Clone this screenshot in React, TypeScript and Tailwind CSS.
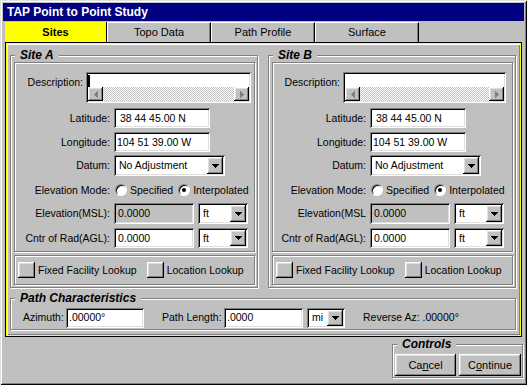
import React from "react";

const raised =
  "shadow-[inset_-1px_-1px_#000,inset_1px_1px_#fff,inset_-2px_-2px_#808080,inset_2px_2px_#dfdfdf]";
const sunken =
  "shadow-[inset_1px_1px_#808080,inset_-1px_-1px_#fff,inset_2px_2px_#000,inset_-2px_-2px_#dfdfdf]";
const etched = "border border-[#808080] shadow-[inset_1px_1px_#fff,1px_1px_#fff]";
const dither =
  "bg-[image:repeating-conic-gradient(#fff_0_25%,#c0c0c0_0_50%)] bg-[length:2px_2px]";

function Tri({ dir, fill = "#000" }: { dir: "down" | "left" | "right"; fill?: string }) {
  if (dir === "down") {
    return (
      <svg width="7" height="4" shapeRendering="crispEdges" fill={fill}>
        <rect x="0" y="0" width="7" height="1" />
        <rect x="1" y="1" width="5" height="1" />
        <rect x="2" y="2" width="3" height="1" />
        <rect x="3" y="3" width="1" height="1" />
      </svg>
    );
  }
  const xs = dir === "left" ? [0, 1, 2, 3] : [3, 2, 1, 0];
  return (
    <svg width="4" height="7" shapeRendering="crispEdges" fill={fill}>
      <rect x={xs[0]} y="3" width="1" height="1" />
      <rect x={xs[1]} y="2" width="1" height="3" />
      <rect x={xs[2]} y="1" width="1" height="5" />
      <rect x={xs[3]} y="0" width="1" height="7" />
    </svg>
  );
}

function Group({
  title,
  className,
  children,
}: {
  title: string;
  className: string;
  children: React.ReactNode;
}) {
  return (
    <div className={`relative ${etched} ${className}`}>
      <span className="absolute -top-[8px] left-[4px] px-[5px] bg-[#c0c0c0] font-bold italic text-[12px] leading-[14px] whitespace-nowrap">
        {title}
      </span>
      {children}
    </div>
  );
}

function Field({ className, text, pad = "pl-[1px]", bg = "bg-white" }: { className: string; text: string; pad?: string; bg?: string }) {
  return (
    <div className={`${className} h-full ${bg} ${sunken} flex items-center whitespace-pre ${pad}`}>
      <span className="pl-[2px]">{text}</span>
    </div>
  );
}

function Select({ className, text }: { className: string; text: string }) {
  return (
    <div className={`${className} h-full bg-white ${sunken} p-[2px] flex`}>
      <span className="flex-1 pl-[3px] flex items-center whitespace-nowrap overflow-hidden">{text}</span>
      <div className={`w-[16px] h-full bg-[#c0c0c0] ${raised} flex items-center justify-center`}>
        <Tri dir="down" />
      </div>
    </div>
  );
}

function Radio({ checked }: { checked?: boolean }) {
  return (
    <span className="w-[12px] h-[12px] rounded-full bg-white border border-t-[#808080] border-l-[#808080] border-r-[#fff] border-b-[#fff] shadow-[inset_1px_1px_#000] flex items-center justify-center">
      {checked && <span className="w-[4px] h-[4px] rounded-full bg-black" />}
    </span>
  );
}

function Row({ lbl, label, cls, children }: { lbl: string; label: string; cls: string; children: React.ReactNode }) {
  return (
    <div className={`flex items-center ${cls}`}>
      <div className={`${lbl} text-right pr-[4px] whitespace-nowrap`}>{label}</div>
      {children}
    </div>
  );
}

type SiteProps = {
  name: string;
  descLbl: string;
  lbl: string;
  descBox: string;
  caret?: boolean;
  mslLabel: string;
};

function Site({ name, descLbl, lbl, descBox, caret, mslLabel }: SiteProps) {
  return (
    <Group title={name} className="w-[248px] pt-[6px] pl-[3px] pr-[2px] pb-[2px]">
      <div className={`${etched} flex flex-col pt-[9px] pb-[3px]`}>
        {/* description with scroller */}
        <div className="flex">
          <div className={`${descLbl} text-right pr-[3px] pt-[4px]`}>Description:</div>
          <div className={`${descBox} h-[31px] bg-white ${sunken} p-[2px] flex flex-col`}>
            <div className="flex-1 flex pt-[1px]">
              {caret && <div className="w-[2px] h-[12px] bg-black" />}
            </div>
            <div className="h-[14px] flex">
              <div className={`w-[15px] h-full bg-[#c0c0c0] ${raised} flex items-center justify-center`}>
                <Tri dir="left" fill="#808080" />
              </div>
              <div className={`flex-1 ${dither}`} />
              <div className={`w-[15px] h-full bg-[#c0c0c0] ${raised} flex items-center justify-center`}>
                <Tri dir="right" fill="#808080" />
              </div>
            </div>
          </div>
        </div>

        <Row lbl={lbl} label="Latitude:" cls="h-[20px] mt-[5px]">
          <Field className="w-[96px]" text=" 38 44 45.00 N" />
        </Row>
        <Row lbl={lbl} label="Longitude:" cls="h-[20px] mt-[4px]">
          <Field className="w-[96px]" text="104 51 39.00 W" />
        </Row>
        <Row lbl={lbl} label="Datum:" cls="h-[21px] mt-[3px]">
          <Select className="w-[111px]" text="No Adjustment" />
        </Row>
        <Row lbl={lbl} label="Elevation Mode:" cls="h-[18px] mt-[5px]">
          <div className="flex items-center ml-[1px]">
            <Radio />
            <span className="ml-[3px]">Specified</span>
            <span className="ml-[5px]">
              <Radio checked />
            </span>
            <span className="ml-[3px]">Interpolated</span>
          </div>
        </Row>
        <Row lbl={lbl} label={mslLabel} cls="h-[21px] mt-[4px]">
          <Field className="w-[80px]" text="0.0000" pad="pl-[2px]" bg="bg-[#c0c0c0]" />
          <Select className="w-[50px] ml-[4px]" text="ft" />
        </Row>
        <Row lbl={lbl} label="Cntr of Rad(AGL):" cls="h-[20px] mt-[4px]">
          <Field className="w-[80px]" text="0.0000" pad="pl-[2px]" />
          <Select className="w-[50px] ml-[4px]" text="ft" />
        </Row>
      </div>

      {/* lookups */}
      <div className={`${etched} mt-[3px] h-[30px] flex items-center pl-[3px]`}>
        <div className={`w-[17px] h-[16px] bg-[#c0c0c0] ${raised}`} />
        <span className="ml-[3px]">Fixed Facility Lookup</span>
        <div className={`ml-[10px] w-[17px] h-[16px] bg-[#c0c0c0] ${raised}`} />
        <span className="ml-[3px]">Location Lookup</span>
      </div>
    </Group>
  );
}

function Btn({ className, children }: { className: string; children: React.ReactNode }) {
  return (
    <button className={`${className} h-[22px] bg-[#c0c0c0] ${raised} flex items-center justify-center text-[11px]`}>
      {children}
    </button>
  );
}

export default function App() {
  return (
    <div className="w-[527px] h-[385px] bg-[#c0c0c0] p-[3px] flex flex-col text-[10.5px] leading-[13px] text-black font-['Liberation_Sans',Arial,sans-serif] shadow-[inset_1px_1px_#dfdfdf,inset_-1px_-1px_#000,inset_2px_2px_#fff,inset_-2px_-2px_#808080] overflow-hidden select-none">
      {/* title bar */}
      <div className="h-[18px] shrink-0 bg-[#000080] text-white font-bold text-[12px] pl-[4px] flex items-center">
        TAP Point to Point Study
      </div>

      {/* tabs */}
      <div className="mt-[1px] h-[20px] shrink-0 flex pl-[2px] text-[11px]">
        <div className="w-[102px] bg-[#ffff00] font-bold flex items-center justify-center border-r border-black">
          Sites
        </div>
        {["Topo Data", "Path Profile", "Surface"].map((t) => (
          <div
            key={t}
            className="w-[104px] border-t border-l border-r border-t-white border-l-white border-r-black shadow-[inset_-1px_0_#808080] flex items-center justify-center"
          >
            {t}
          </div>
        ))}
      </div>

      {/* tab panel */}
      <div className="mx-[2px] h-[295px] shrink-0 border border-black">
        <div className="h-full border border-[#ffff00]">
          <div className="h-full pt-[1px] pl-[1px] shadow-[inset_1px_1px_#fff,inset_-1px_-1px_#808080]">
            <div className="flex px-[2px] mt-[10px] gap-[10px]">
              <Site
                name="Site A"
                descLbl="w-[71px]"
                lbl="w-[99px]"
                descBox="w-[165px]"
                caret
                mslLabel="Elevation(MSL):"
              />
              <Site
                name="Site B"
                descLbl="w-[70px]"
                lbl="w-[97px]"
                descBox="w-[163px]"
                mslLabel="Elevation(MSL"
              />
            </div>

            <Group title="Path Characteristics" className="mt-[10px] ml-[2px] w-[506px] h-[32px] pt-[7px] pl-[12px] flex items-center">
              <span className="w-[43px] whitespace-nowrap">Azimuth:</span>
              <div className="h-[20px] flex">
                <Field className="w-[78px]" text=".00000°" />
              </div>
              <span className="ml-[18px] w-[62px] whitespace-nowrap">Path Length:</span>
              <div className="h-[20px] flex">
                <Field className="w-[79px]" text=".0000" />
                <Select className="w-[38px] ml-[4px]" text="mi" />
              </div>
              <span className="ml-[18px] whitespace-nowrap">Reverse Az: .00000°</span>
            </Group>
          </div>
        </div>
      </div>

      {/* controls */}
      <div className="flex justify-end mt-[7px] mr-[1px]">
        <Group title="Controls" className="w-[131px] pt-[9px] pl-[2px] pb-[1px] flex gap-[3px]">
          <Btn className="w-[61px]">
            Ca<u>n</u>cel
          </Btn>
          <Btn className="w-[62px]">
            C<u>o</u>ntinue
          </Btn>
        </Group>
      </div>
    </div>
  );
}
